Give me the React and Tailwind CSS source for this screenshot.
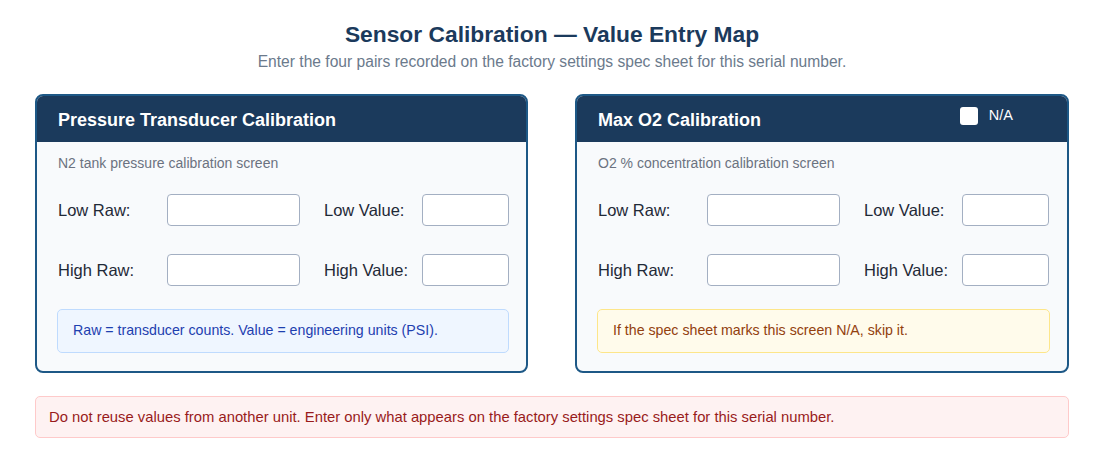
export default function App() {
  const font = { fontFamily: '"Liberation Sans", Arial, sans-serif' };

  const Field = ({ label, wide }) => (
    <>
      <label className="text-[16.5px] leading-[20px] text-[#1f2937] whitespace-nowrap">{label}</label>
      <input
        type="text"
        className={`${wide ? "w-[133px]" : "w-[87px]"} h-[32px] rounded-[4px] border border-[#a3afc2] bg-white outline-none`}
      />
    </>
  );

  const Card = ({ title, desc, note, tone, na, width }) => (
    <div className={`${width} shrink-0 rounded-[8px] border-2 border-[#1d5886] bg-[#f8fafc] overflow-hidden`}>
      <div className="relative h-[46px] bg-[#1b3a5c] px-[21px] pt-[3px] flex items-center">
        <h2 className="text-[18px] font-bold text-white">{title}</h2>
        {na && (
          <label className="absolute right-[54px] top-[9px] flex items-center gap-[11px] text-[14.5px] text-white">
            <span className="w-[18px] h-[18px] rounded-[3px] bg-white" />
            N/A
          </label>
        )}
      </div>
      <div className="pl-[20px] pr-[17px] pt-[13px] pb-[18px]">
        <p className="pl-[1px] text-[14px] text-[#6b7280] leading-[16px]">{desc}</p>
        <div className="ml-[1px] mt-[23px] grid grid-cols-[109px_157px_98px_87px] gap-y-[28px] items-center">
          <Field label="Low Raw:" wide />
          <Field label="Low Value:" />
          <Field label="High Raw:" wide />
          <Field label="High Value:" />
        </div>
        <div
          className={`mt-[23px] h-[44px] rounded-[5px] border px-[15px] flex items-center text-[14.2px] ${
            tone === "blue"
              ? "bg-[#eff6ff] border-[#bfdbfe] text-[#1e40af]"
              : "bg-[#fffbeb] border-[#fde68a] text-[#92400e]"
          }`}
        >
          {note}
        </div>
      </div>
    </div>
  );

  return (
    <div className="w-[1104px] h-[456px] bg-white px-[35px]" style={font}>
      <h1 className="pt-[20px] text-center text-[22.8px] font-bold text-[#1b3a5c] leading-[28px]">
        Sensor Calibration — Value Entry Map
      </h1>
      <p className="mt-[5px] text-center text-[15.6px] text-[#6b7a8c] leading-[18px]">
        Enter the four pairs recorded on the factory settings spec sheet for this serial number.
      </p>
      <div className="mt-[23px] flex gap-[47px]">
        <Card
          width="w-[493px]"
          title="Pressure Transducer Calibration"
          desc="N2 tank pressure calibration screen"
          note="Raw = transducer counts. Value = engineering units (PSI)."
          tone="blue"
        />
        <Card
          width="w-[494px]"
          title="Max O2 Calibration"
          desc="O2 % concentration calibration screen"
          note="If the spec sheet marks this screen N/A, skip it."
          tone="amber"
          na
        />
      </div>
      <div className="mt-[23px] h-[42px] rounded-[5px] border border-[#fecaca] bg-[#fef2f2] px-[13px] flex items-center text-[14.8px] text-[#991b1b]">
        Do not reuse values from another unit. Enter only what appears on the factory settings spec sheet for this serial number.
      </div>
    </div>
  );
}
